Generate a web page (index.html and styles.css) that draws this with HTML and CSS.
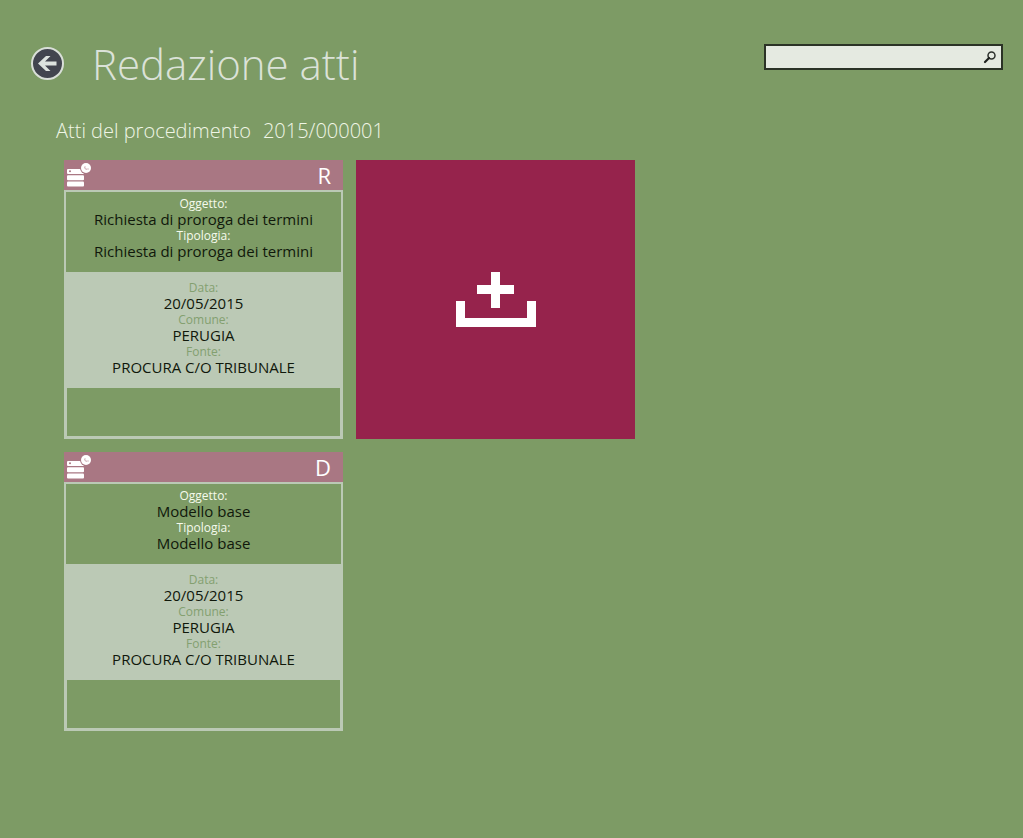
FILE: index.html
```html
<!DOCTYPE html>
<html lang="it">
<head>
<meta charset="utf-8">
<meta name="viewport" content="width=device-width, initial-scale=1">
<title>Redazione atti</title>
<link rel="stylesheet" href="styles.css">
</head>
<body>
<svg class="sprite" aria-hidden="true">
  <symbol id="server" viewBox="0 0 26 26">
    <g fill="#fff">
      <rect x="1" y="7" width="17" height="5" rx="1"/>
      <rect x="1" y="13.300" width="17" height="5" rx="1"/>
      <rect x="1" y="19.600" width="17" height="5" rx="1"/>
      <circle cx="20" cy="6" r="6" fill="#a97783"/>
      <circle cx="20" cy="6" r="5"/>
    </g>
    <circle cx="4" cy="9.200" r="1" fill="#a97783"/>
    <path d="M19 4v3h4M18 5l3 3" fill="none" stroke="#d9c0c6" stroke-width="1"/>
  </symbol>
</svg>
<header class="topbar">
  <button class="back" type="button" aria-label="Indietro">
    <svg viewBox="0 0 34 34" width="34" height="34" aria-hidden="true">
      <circle cx="17.500" cy="16.500" r="15.500" fill="#42454f" stroke="#d9dfd8" stroke-width="2"/>
      <path d="M8 16.500L16 9H20.500L15 14.500H26.500V18.500H15L20.500 24H16Z" fill="#dde3df"/>
    </svg>
  </button>
  <h1 class="title">Redazione atti</h1>
  <form class="search" role="search">
    <input class="search-input" type="search" aria-label="Cerca">
    <button class="search-button" type="button" aria-label="Avvia ricerca">
      <svg viewBox="0 0 14 14" width="14" height="14" aria-hidden="true">
        <circle cx="8.500" cy="5.500" r="3.500" fill="none" stroke="#2c302c" stroke-width="1.500"/>
        <path d="M6 8L2 12" stroke="#1c1f1c" stroke-width="2.200" stroke-linecap="round"/>
      </svg>
    </button>
  </form>
</header>
<main class="content">
  <h2 class="subtitle"><span>Atti del procedimento</span><span>2015/000001</span></h2>
  <div class="tiles">
    <article class="card">
      <header class="card-head">
        <svg class="card-icon" aria-hidden="true"><use href="#server"/></svg>
        <span class="card-code">R</span>
      </header>
      <div class="card-body">
        <dl class="info subject">
          <dt>Oggetto:</dt><dd>Richiesta di proroga dei termini</dd>
          <dt>Tipologia:</dt><dd>Richiesta di proroga dei termini</dd>
        </dl>
        <dl class="info details">
          <dt>Data:</dt><dd>20/05/2015</dd>
          <dt>Comune:</dt><dd>PERUGIA</dd>
          <dt>Fonte:</dt><dd>PROCURA C/O TRIBUNALE</dd>
        </dl>
        <div class="card-foot"></div>
      </div>
    </article>
    <button class="add" type="button" aria-label="Aggiungi atto">
      <svg viewBox="0 0 80 56" width="80" height="56" aria-hidden="true">
        <path fill="#fff" d="M35 0h9v13h14v9H44v14H35V22H21V13h14zM0 29h9v17h62V29h9v26H0z"/>
      </svg>
    </button>
    <article class="card">
      <header class="card-head">
        <svg class="card-icon" aria-hidden="true"><use href="#server"/></svg>
        <span class="card-code">D</span>
      </header>
      <div class="card-body">
        <dl class="info subject">
          <dt>Oggetto:</dt><dd>Modello base</dd>
          <dt>Tipologia:</dt><dd>Modello base</dd>
        </dl>
        <dl class="info details">
          <dt>Data:</dt><dd>20/05/2015</dd>
          <dt>Comune:</dt><dd>PERUGIA</dd>
          <dt>Fonte:</dt><dd>PROCURA C/O TRIBUNALE</dd>
        </dl>
        <div class="card-foot"></div>
      </div>
    </article>
  </div>
</main>
</body>
</html>
```

FILE: styles.css
```css
* { box-sizing: border-box; }

body {
  margin: 0;
  min-height: 100vh;
  background: #7d9b65;
  font-family: "Open Sans", "Noto Sans", sans-serif;
}

.sprite { display: block; width: 0; height: 0; }

.topbar {
  display: flex;
  align-items: center;
  padding: 34px 20px 0 30px;
}

.back {
  display: flex;
  padding: 0;
  border: 0;
  background: none;
}

.title {
  flex: 1;
  margin: 0 0 0 28px;
  color: #dbe2d8;
  font-size: 42px;
  font-weight: 300;
  line-height: 60px;
}

.search {
  display: flex;
  align-items: center;
  align-self: flex-start;
  width: 239px;
  height: 26px;
  margin-top: 10px;
  border: 2px solid #2b3326;
  background: #e5eae1;
}

.search-input {
  flex: 1;
  min-width: 0;
  height: 100%;
  padding: 0 4px;
  border: 0;
  outline: 0;
  background: none;
  font: inherit;
  appearance: none;
}

.search-button {
  display: flex;
  padding: 0 4px 0 0;
  border: 0;
  background: none;
}

.content { padding: 22px 20px 20px 56px; }

.subtitle {
  display: flex;
  gap: 12px;
  margin: 0;
  color: #f0f6e6;
  font-size: 20px;
  font-weight: 300;
  line-height: 30px;
}

.tiles {
  display: grid;
  grid-template-columns: repeat(auto-fit, 279px);
  gap: 13px;
  max-width: 600px;
  padding: 14px 0 0 8px;
}

.card {
  display: flex;
  flex-direction: column;
  min-height: 279px;
}

.card-head {
  display: flex;
  align-items: center;
  justify-content: space-between;
  height: 30px;
  padding: 0 12px 0 2px;
  background: #a97783;
  color: #fff;
}

.card-icon { width: 26px; height: 26px; }

.card-code {
  font-size: 22px;
  line-height: 28px;
}

.card-body {
  flex: 1;
  display: flex;
  flex-direction: column;
  border: 2px solid #bbc9b5;
  border-bottom-width: 3px;
}

.info {
  margin: 0;
  text-align: center;
  color: #10180b;
}

.info dt {
  font-size: 12px;
  line-height: 14px;
}

.info dd {
  margin: 0 0 2px;
  font-size: 15px;
  line-height: 16px;
}

.subject { padding: 5px 0 11px; }
.subject dt { color: #f5faec; }

.details {
  padding: 9px 0 11px;
  background: #bbc9b5;
}
.details dt { color: #83a070; }

.card-foot {
  flex: 1;
  border: 0 solid #bbc9b5;
  border-width: 0 1px;
}

.add {
  display: flex;
  align-items: center;
  justify-content: center;
  padding: 0;
  border: 0;
  background: #96234c;
}
```
